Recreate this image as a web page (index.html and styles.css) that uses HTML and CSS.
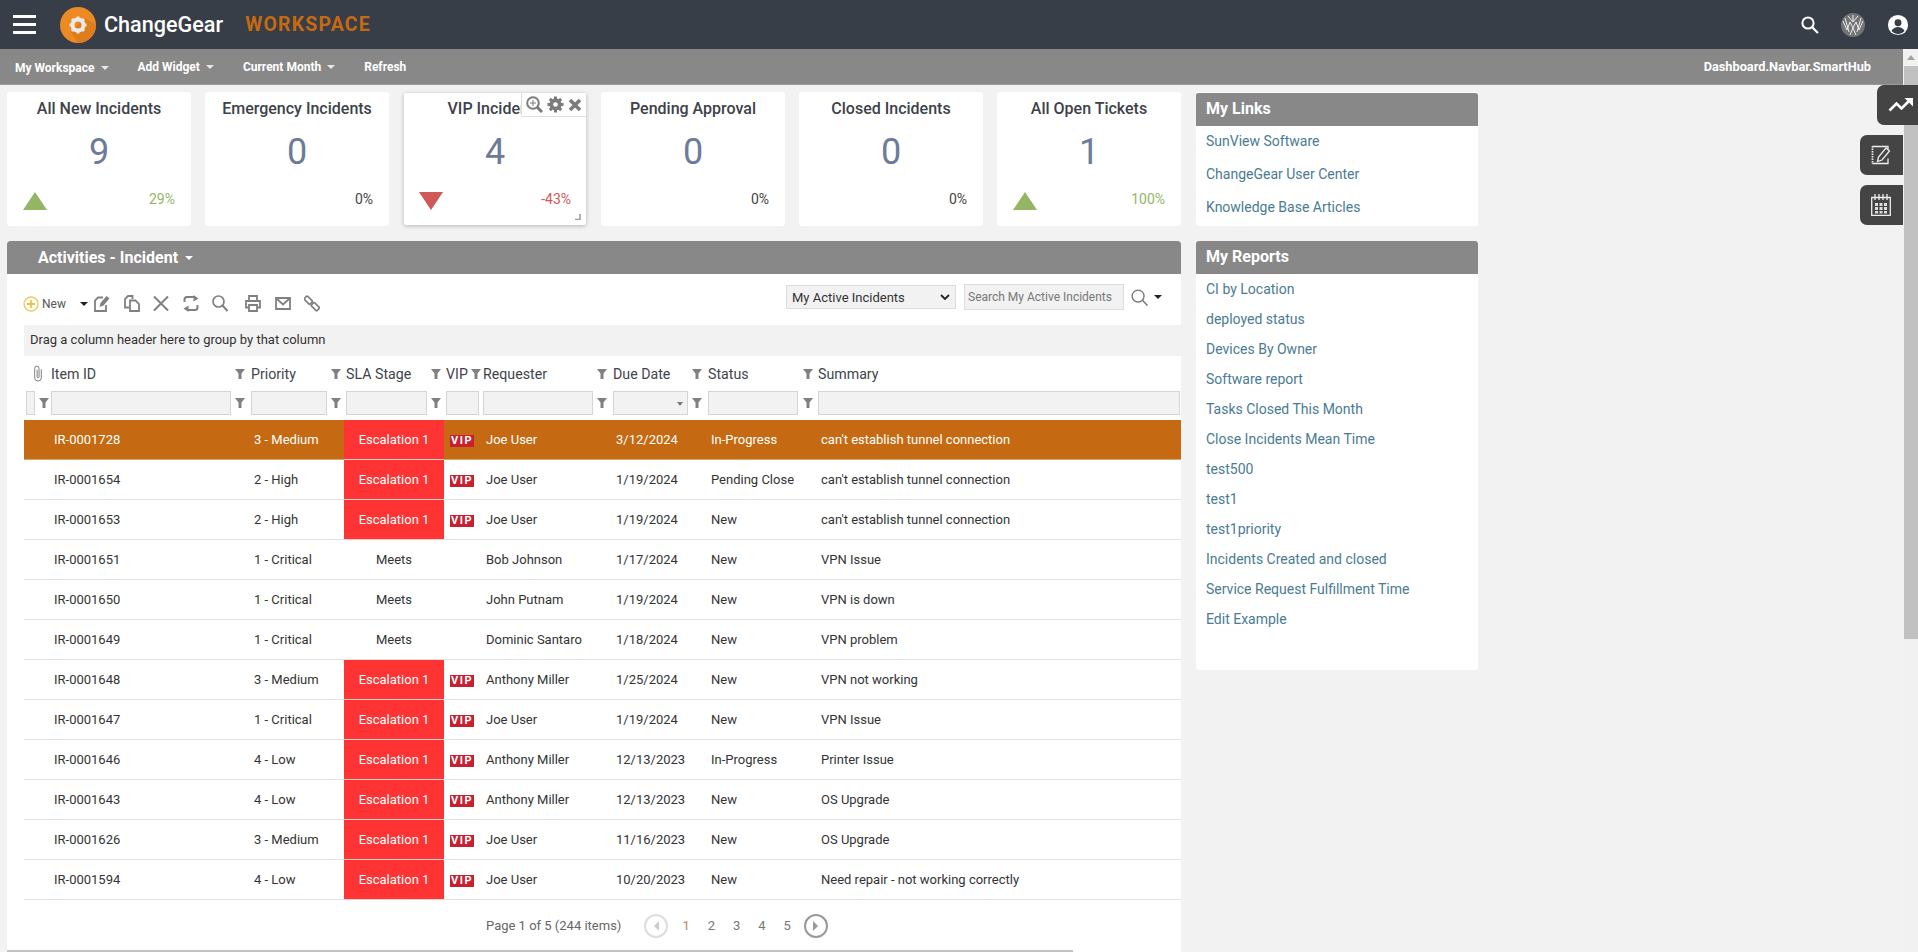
FILE: index.html
```html
<!DOCTYPE html>
<html lang="en">
<head>
<meta charset="utf-8">
<title>ChangeGear Workspace</title>
<link rel="stylesheet" href="styles.css">
</head>
<body>
<header class="topbar">
  <div class="burger"><i></i><i></i><i></i></div>
  <svg class="logo" viewBox="0 0 36 36"><circle cx="18" cy="18" r="18" fill="#ee8a23"/><path d="M18 36A18 18 0 0 0 36 18L25 11 11 25z" fill="#de7d1c"/><g fill="none" stroke="#eaeaea"><circle cx="18" cy="18" r="5.500" stroke-width="4"/><path d="M18 9.500v4M18 22.500v4M9.500 18h4M22.500 18h4M12 12l3 3M21 21l3 3M24 12l-3 3M15 21l-3 3" stroke-width="3"/></g></svg>
  <span class="brand">ChangeGear</span>
  <span class="product">WORKSPACE</span>
  <div class="top-icons">
    <svg class="ti-search" viewBox="0 0 20 20"><circle cx="8" cy="8" r="5.600" fill="none" stroke="#fff" stroke-width="2"/><path d="M12 12l6 6" stroke="#fff" stroke-width="2.200"/></svg>
    <svg class="ti-avatar" viewBox="0 0 24 24"><circle cx="12" cy="12" r="12" fill="#747474"/><path d="M2 8l4 9 3-8 3 6 3-6 3 8 4-9M4 5l4 14M20 5l-4 14M12 2v6M7 3l5 6 5-6M9 22l3-7 3 7" fill="none" stroke="#eee" stroke-width="1"/></svg>
    <svg class="ti-user" viewBox="0 0 24 24"><circle cx="12" cy="12" r="11" fill="#fff"/><circle cx="12" cy="9.500" r="3.800" fill="#373e47"/><path d="M4.800 18.600c1.600-3.200 4.300-4.400 7.200-4.400s5.600 1.200 7.200 4.400A10 10 0 0 1 12 22a10 10 0 0 1-7.200-3.400z" fill="#373e47"/></svg>
  </div>
</header>
<nav class="navbar">
  <a class="nav-item first">My Workspace<b class="caret"></b></a>
  <a class="nav-item">Add Widget<b class="caret"></b></a>
  <a class="nav-item">Current Month<b class="caret"></b></a>
  <a class="nav-item">Refresh</a>
  <span class="nav-right">Dashboard.Navbar.SmartHub</span>
</nav>
<main class="main">
  <div class="left">
    <section class="cards">
      <article class="card"><h3>All New Incidents</h3><div class="num">9</div><div class="foot"><svg class="tri" viewBox="0 0 24 18"><path d="M12 0l12 18H0z" fill="#93b665"/></svg><span class="pct up">29%</span></div></article>
      <article class="card"><h3>Emergency Incidents</h3><div class="num">0</div><div class="foot"><span class="pct">0%</span></div></article>
      <article class="card active"><h3>VIP Incidents</h3><div class="num">4</div><div class="foot"><svg class="tri" viewBox="0 0 24 18"><path d="M0 0h24L12 18z" fill="#cf5858"/></svg><span class="pct down">-43%</span></div>
        <div class="card-tools">
          <svg viewBox="0 0 17 17" width="17" height="17"><circle cx="7" cy="7" r="5.800" fill="none" stroke="#7b7b7b" stroke-width="2"/><path d="M11 11l5 5" stroke="#7b7b7b" stroke-width="3"/><path d="M7 4v6M4 7h6" stroke="#7b7b7b"/></svg>
          <svg viewBox="0 0 18 18" width="17" height="17"><g fill="none" stroke="#7b7b7b"><circle cx="9" cy="9" r="4.500" stroke-width="4"/><path d="M9 0.500v3M9 14.500v3M0.500 9h3M14.500 9h3M3 3l2 2M13 13l2 2M15 3l-2 2M5 13l-2 2" stroke-width="3.200"/></g></svg>
          <svg viewBox="0 0 14 14" width="14" height="14"><path d="M2 2l10 10M12 2L2 12" stroke="#7b7b7b" stroke-width="3.600"/></svg>
        </div>
        <svg class="resize" viewBox="0 0 6 6"><path d="M5 0v5.500H0" fill="none" stroke="#999" stroke-width="1.500"/></svg>
      </article>
      <article class="card"><h3>Pending Approval</h3><div class="num">0</div><div class="foot"><span class="pct">0%</span></div></article>
      <article class="card"><h3>Closed Incidents</h3><div class="num">0</div><div class="foot"><span class="pct">0%</span></div></article>
      <article class="card"><h3>All Open Tickets</h3><div class="num">1</div><div class="foot"><svg class="tri" viewBox="0 0 24 18"><path d="M12 0l12 18H0z" fill="#93b665"/></svg><span class="pct up">100%</span></div></article>
    </section>
    <section class="activities">
      <div class="panel-head act-head">Activities - Incident<b class="caret big"></b></div>
      <div class="toolbar">
        <svg class="plus" viewBox="0 0 16 16"><circle cx="8" cy="8" r="7" fill="none" stroke="#f0c95c" stroke-width="1.400"/><path d="M8 4v8M4 8h8" stroke="#f0c040" stroke-width="1.800"/></svg>
        <span class="new">New</span>
        <b class="mini-caret"></b>
        <svg class="tool t-edit" viewBox="0 0 16 17"><path d="M9 2.500H4L1 5.500V16h11V10" fill="none" stroke="#808080" stroke-width="1.800"/><path d="M5.500 12l1-4 6-7 3 2.500-6 7z" fill="#808080"/></svg>
        <svg class="tool t-copy" viewBox="0 0 16 17"><path d="M5 12.500H1V4l3-3h4.500v3" fill="none" stroke="#808080" stroke-width="1.800"/><path d="M6 5.500h5.500l3.500 3.500v7H6z" fill="none" stroke="#808080" stroke-width="1.800"/></svg>
        <svg class="tool t-x" viewBox="0 0 16 17"><path d="M1 1.500l14 14M15 1.500l-14 14" stroke="#808080" stroke-width="2"/></svg>
        <svg class="tool t-ref" viewBox="0 0 16 17"><path d="M1.500 7V4.500Q1.500 2 4 2h7M14.500 10v2.500q0 2.500-2.500 2.500H5" fill="none" stroke="#808080" stroke-width="2"/><path d="M10.500 0l5 3.500-5 3zM5.500 17l-5-3.500 5-3z" fill="#808080"/></svg>
        <svg class="tool t-find" viewBox="0 0 16 17"><circle cx="6.500" cy="6.500" r="5.500" fill="none" stroke="#808080" stroke-width="1.700"/><path d="M10.500 10.500l5 5.500" stroke="#808080" stroke-width="2"/></svg>
        <svg class="tool t-print" viewBox="0 0 16 17"><path d="M4 6V1h8v5M4 12.500H1V6h14v6.500h-3M4 10h8v6H4z" fill="none" stroke="#808080" stroke-width="1.800"/></svg>
        <svg class="tool t-mail" viewBox="0 0 16 17"><path d="M1 3h14v11H1z" fill="none" stroke="#808080" stroke-width="1.800"/><path d="M1 3l7 6.500L15 3" fill="none" stroke="#808080" stroke-width="1.800"/></svg>
        <svg class="tool t-link" viewBox="0 0 16 17"><rect x="0.500" y="3" width="8" height="4.500" rx="1" transform="rotate(45 4.500 5)" fill="none" stroke="#808080" stroke-width="1.700"/><rect x="7.500" y="9.500" width="8" height="4.500" rx="1" transform="rotate(45 11.500 11.500)" fill="none" stroke="#808080" stroke-width="1.700"/></svg>
        <div class="tool-right">
          <div class="select-box">My Active Incidents<svg class="chev" viewBox="0 0 10 6"><path d="M1 1l4 4 4-4" fill="none" stroke="#222" stroke-width="1.800"/></svg></div>
          <div class="search-box">Search My Active Incidents</div>
          <svg class="big-search" viewBox="0 0 18 18"><circle cx="7.500" cy="7.500" r="6.300" fill="none" stroke="#777" stroke-width="1.400"/><path d="M12 12l5.500 5.500" stroke="#777" stroke-width="1.600"/></svg>
          <b class="mini-caret"></b>
        </div>
      </div>
      <div class="group-panel">Drag a column header here to group by that column</div>
      <div class="row head">
        <div class="h-cell clip"><svg class="paper" viewBox="0 0 10 18"><path d="M8.500 4.500v9a3.500 3.500 0 0 1-7 0V3.500a2.300 2.300 0 0 1 4.600 0v9a1 1 0 0 1-2 0V5" fill="none" stroke="#777" stroke-width="1"/></svg></div>
        <div class="h-cell">Item ID<svg class="f" viewBox="0 0 10 10"><path d="M0 0h10L6.500 4.500V10h-3V4.500z"/></svg></div>
        <div class="h-cell">Priority<svg class="f" viewBox="0 0 10 10"><path d="M0 0h10L6.500 4.500V10h-3V4.500z"/></svg></div>
        <div class="h-cell">SLA Stage<svg class="f" viewBox="0 0 10 10"><path d="M0 0h10L6.500 4.500V10h-3V4.500z"/></svg></div>
        <div class="h-cell">VIP<svg class="f" viewBox="0 0 10 10"><path d="M0 0h10L6.500 4.500V10h-3V4.500z"/></svg></div>
        <div class="h-cell">Requester<svg class="f" viewBox="0 0 10 10"><path d="M0 0h10L6.500 4.500V10h-3V4.500z"/></svg></div>
        <div class="h-cell">Due Date<svg class="f" viewBox="0 0 10 10"><path d="M0 0h10L6.500 4.500V10h-3V4.500z"/></svg></div>
        <div class="h-cell">Status<svg class="f" viewBox="0 0 10 10"><path d="M0 0h10L6.500 4.500V10h-3V4.500z"/></svg></div>
        <div class="h-cell">Summary</div>
      </div>
      <div class="row filters">
        <div class="f-cell"><span class="inp"></span><svg class="f" viewBox="0 0 10 10"><path d="M0 0h10L6.500 4.500V10h-3V4.500z"/></svg></div>
        <div class="f-cell"><span class="inp"></span><svg class="f" viewBox="0 0 10 10"><path d="M0 0h10L6.500 4.500V10h-3V4.500z"/></svg></div>
        <div class="f-cell"><span class="inp"></span><svg class="f" viewBox="0 0 10 10"><path d="M0 0h10L6.500 4.500V10h-3V4.500z"/></svg></div>
        <div class="f-cell"><span class="inp"></span><svg class="f" viewBox="0 0 10 10"><path d="M0 0h10L6.500 4.500V10h-3V4.500z"/></svg></div>
        <div class="f-cell"><span class="inp"></span></div>
        <div class="f-cell"><span class="inp"></span><svg class="f" viewBox="0 0 10 10"><path d="M0 0h10L6.500 4.500V10h-3V4.500z"/></svg></div>
        <div class="f-cell"><span class="inp"><b class="dd"></b></span><svg class="f" viewBox="0 0 10 10"><path d="M0 0h10L6.500 4.500V10h-3V4.500z"/></svg></div>
        <div class="f-cell"><span class="inp"></span><svg class="f" viewBox="0 0 10 10"><path d="M0 0h10L6.500 4.500V10h-3V4.500z"/></svg></div>
        <div class="f-cell"><span class="inp"></span></div>
      </div>
      <div class="row data selected"><div></div><div>IR-0001728</div><div>3 - Medium</div><div class="esc">Escalation 1</div><div><span class="vip">VIP</span></div><div>Joe User</div><div>3/12/2024</div><div>In-Progress</div><div>can't establish tunnel connection</div></div>
      <div class="row data"><div></div><div>IR-0001654</div><div>2 - High</div><div class="esc">Escalation 1</div><div><span class="vip">VIP</span></div><div>Joe User</div><div>1/19/2024</div><div>Pending Close</div><div>can't establish tunnel connection</div></div>
      <div class="row data"><div></div><div>IR-0001653</div><div>2 - High</div><div class="esc">Escalation 1</div><div><span class="vip">VIP</span></div><div>Joe User</div><div>1/19/2024</div><div>New</div><div>can't establish tunnel connection</div></div>
      <div class="row data"><div></div><div>IR-0001651</div><div>1 - Critical</div><div class="meets">Meets</div><div></div><div>Bob Johnson</div><div>1/17/2024</div><div>New</div><div>VPN Issue</div></div>
      <div class="row data"><div></div><div>IR-0001650</div><div>1 - Critical</div><div class="meets">Meets</div><div></div><div>John Putnam</div><div>1/19/2024</div><div>New</div><div>VPN is down</div></div>
      <div class="row data"><div></div><div>IR-0001649</div><div>1 - Critical</div><div class="meets">Meets</div><div></div><div>Dominic Santaro</div><div>1/18/2024</div><div>New</div><div>VPN problem</div></div>
      <div class="row data"><div></div><div>IR-0001648</div><div>3 - Medium</div><div class="esc">Escalation 1</div><div><span class="vip">VIP</span></div><div>Anthony Miller</div><div>1/25/2024</div><div>New</div><div>VPN not working</div></div>
      <div class="row data"><div></div><div>IR-0001647</div><div>1 - Critical</div><div class="esc">Escalation 1</div><div><span class="vip">VIP</span></div><div>Joe User</div><div>1/19/2024</div><div>New</div><div>VPN Issue</div></div>
      <div class="row data"><div></div><div>IR-0001646</div><div>4 - Low</div><div class="esc">Escalation 1</div><div><span class="vip">VIP</span></div><div>Anthony Miller</div><div>12/13/2023</div><div>In-Progress</div><div>Printer Issue</div></div>
      <div class="row data"><div></div><div>IR-0001643</div><div>4 - Low</div><div class="esc">Escalation 1</div><div><span class="vip">VIP</span></div><div>Anthony Miller</div><div>12/13/2023</div><div>New</div><div>OS Upgrade</div></div>
      <div class="row data"><div></div><div>IR-0001626</div><div>3 - Medium</div><div class="esc">Escalation 1</div><div><span class="vip">VIP</span></div><div>Joe User</div><div>11/16/2023</div><div>New</div><div>OS Upgrade</div></div>
      <div class="row data"><div></div><div>IR-0001594</div><div>4 - Low</div><div class="esc">Escalation 1</div><div><span class="vip">VIP</span></div><div>Joe User</div><div>10/20/2023</div><div>New</div><div>Need repair - not working correctly</div></div>
      <div class="pager">
        <span class="summary">Page 1 of 5 (244 items)</span>
        <span class="pg-btn off"><b class="arr-l"></b></span>
        <span class="pg cur">1</span><span class="pg">2</span><span class="pg">3</span><span class="pg">4</span><span class="pg">5</span>
        <span class="pg-btn next"><b class="arr-r"></b></span>
      </div>
      <div class="hscroll"></div>
    </section>
  </div>
  <aside class="right">
    <section class="panel links">
      <div class="panel-head side-head">My Links</div>
      <ul class="list-links"><li>SunView Software</li><li>ChangeGear User Center</li><li>Knowledge Base Articles</li></ul>
    </section>
    <section class="panel reports">
      <div class="panel-head side-head">My Reports</div>
      <ul class="list-reports"><li>CI by Location</li><li>deployed status</li><li>Devices By Owner</li><li>Software report</li><li>Tasks Closed This Month</li><li>Close Incidents Mean Time</li><li>test500</li><li>test1</li><li>test1priority</li><li>Incidents Created and closed</li><li>Service Request Fulfillment Time</li><li>Edit Example</li></ul>
    </section>
  </aside>
</main>
<div class="vscroll"><b class="up-arrow"></b><div class="thumb"></div></div>
<div class="side-tab tab-trend"><svg viewBox="0 0 25 14" width="25" height="14"><path d="M1.500 12.500l7-7 5 5 8-8" fill="none" stroke="#fff" stroke-width="2.600"/><path d="M16.500 0H25v8.500z" fill="#fff"/></svg></div>
<div class="side-tab tab-note"><svg viewBox="0 0 20 20" width="20" height="20"><path d="M1.500 1v18" fill="none" stroke="#eee" stroke-dasharray="1.500 1" stroke-width="1.800"/><path d="M1.500 1.500h15.500v3M1.500 18.500h15.500v-5" fill="none" stroke="#eee" stroke-width="1.300"/><path d="M6.500 16.500l1-4.500 7.500-9 3.500 3-7.500 9z" fill="none" stroke="#eee" stroke-width="1.300"/></svg></div>
<div class="side-tab tab-cal"><svg viewBox="0 0 20 22" width="20" height="22"><path d="M0.700 3.500h18.600v18H0.700z" fill="none" stroke="#eee" stroke-width="1.300"/><path d="M4 0v6M8 0v6M12 0v6M16 0v6" stroke="#eee" stroke-width="1.300"/><path d="M4 9h3v3H4zM8.500 9h3v3h-3zM13 9h3v3h-3zM4 13h3v3H4zM8.500 13h3v3h-3zM13 13h3v3h-3zM4 17h3v2.500H4zM8.500 17h3v2.500h-3zM13 17h3v2.500h-3z" fill="#ddd"/></svg></div>
</body>
</html>
```

FILE: styles.css
```css
* { box-sizing: border-box; }
html, body { margin: 0; height: 100%; overflow: hidden; }
body { background: #f2f2f2; font-family: Roboto, "Liberation Sans", sans-serif; font-size: 13px; color: #333; width: 1918px; height: 952px; position: relative; }

.topbar { height: 49px; background: #373e47; display: flex; align-items: center; color: #fff; }
.burger { width: 23px; margin-left: 13px; margin-right: 1px; display: flex; flex-direction: column; gap: 5px; }
.burger i { display: block; height: 3px; background: #fff; }
.logo { width: 36px; height: 36px; margin-left: 23px; }
.brand { font-size: 21.600px; font-weight: 500; margin-left: 8px; }
.product { font-size: 19.500px; font-weight: 700; color: #c56a12; letter-spacing: 1.200px; margin-left: 22px; }
.top-icons { margin-left: auto; display: flex; align-items: center; }
.ti-search { width: 20px; height: 20px; margin-right: 21px; }
.ti-avatar { width: 24px; height: 24px; margin-right: 22px; }
.ti-user { width: 22px; height: 22px; margin-right: 9px; }

.navbar { height: 36px; width: 1904px; background: #888; color: #fff; display: flex; align-items: center; font-weight: 700; font-size: 12px; padding-left: 15px; border-bottom: 1px solid #999; }
.nav-item { margin-right: 29px; display: flex; align-items: center; }
.nav-item.first { padding-top: 2px; }
.caret { display: inline-block; border: 4px solid transparent; border-top-color: #e8e8e8; border-bottom: 0; margin-left: 6px; }
.caret.big { margin-left: 7px; border-top-color: #fff; }
.nav-right { margin-left: auto; margin-right: 33px; font-size: 12.750px; }

.main { display: flex; gap: 14px; padding: 7px 0 0 7px; align-items: flex-start; }
.left { width: 1174px; }
.cards { display: flex; gap: 14px; }
.card { width: 184px; height: 134px; background: #fff; border-radius: 3px; position: relative; text-align: center; overflow: hidden; flex: none; }
.card h3 { margin: 7px 0 0; font-size: 16px; font-weight: 500; color: #3d4249; line-height: 19px; }
.num { font-size: 36px; font-weight: 400; color: #6c7b9b; line-height: 45px; margin-top: 12px; }
.foot { position: absolute; left: 16px; right: 16px; bottom: 15px; display: flex; align-items: flex-end; justify-content: flex-end; height: 20px; }
.tri { width: 24px; height: 18px; position: absolute; left: 0; bottom: 1px; }
.pct { font-size: 14px; color: #444; line-height: 16px; margin-bottom: 4px; }
.pct.up { color: #93b665; }
.pct.down { color: #cf5858; }
.card.active { box-shadow: 0 1px 4px rgba(0,0,0,.25); width: 182px; margin: 1px; height: 132px; border-radius: 2px; overflow: visible; }
.card.active h3 { margin-top: 6px; }
.card.active .foot { left: 15px; right: 15px; bottom: 14px; }
.card-tools { position: absolute; right: 0; top: 0; height: 24px; width: 65px; background: #fff; border: 1px solid #ddd; border-top: 0; border-right: 0; border-bottom-left-radius: 2px; display: flex; align-items: center; gap: 4px; padding-left: 4px; }
.resize { position: absolute; right: 5px; bottom: 5px; width: 6px; height: 6px; }

.activities { margin-top: 15px; background: #fff; height: 711px; border-radius: 3px 3px 0 0; overflow: hidden; position: relative; }
.panel-head { background: #888; color: #fff; font-weight: 700; height: 33px; display: flex; align-items: center; border-radius: 3px 3px 0 0; font-size: 16px; }
.act-head { padding-left: 31px; }
.toolbar { height: 51px; display: flex; align-items: center; padding: 8px 0 0 16px; position: relative; }
.plus { width: 16px; height: 16px; flex: none; }
.new { font-size: 12px; color: #555; margin-left: 3px; }
.mini-caret { border: 4px solid transparent; border-top: 4px solid #222; border-bottom: 0; display: inline-block; }
.toolbar > .mini-caret { margin-left: 14px; }
.tool { width: 16px; height: 17px; flex: none; }
.t-edit { margin-left: 6px; }
.t-copy { margin-left: 14px; }
.t-x { margin-left: 13px; }
.t-ref { margin-left: 14px; }
.t-find { margin-left: 13px; }
.t-print { margin-left: 17px; }
.t-mail { margin-left: 14px; }
.t-link { margin-left: 13px; }
.tool-right { position: absolute; right: 0; top: 10px; display: flex; align-items: center; }
.select-box { width: 170px; height: 24px; background: #f2f2f2; border: 1px solid #ddd; display: flex; align-items: center; justify-content: space-between; padding: 0 5px; font-size: 13px; color: #333; }
.chev { width: 10px; height: 6px; }
.search-box { width: 160px; height: 26px; margin-left: 8px; background: #f2f2f2; border: 1px solid #ddd; font-size: 12px; color: #777; display: flex; align-items: center; padding-left: 3px; }
.big-search { width: 17px; height: 17px; margin-left: 7px; }
.tool-right .mini-caret { margin: 0 19px 0 6px; }
.group-panel { margin-left: 17px; height: 31px; background: #f2f2f2; display: flex; align-items: center; padding: 0 0 2px 6px; font-size: 13px; color: #333; }

.row { display: grid; grid-template-columns: 24px 200px 96px 100px 37px 129px 95px 111px 364px; margin-left: 17px; }
.head { height: 35px; }
.h-cell { position: relative; display: flex; align-items: center; padding-left: 3px; font-size: 14.200px; font-weight: 400; color: #3f444b; white-space: nowrap; }
.h-cell:nth-child(4), .h-cell:nth-child(5), .h-cell:nth-child(6), .h-cell:nth-child(9) { padding-left: 2px; }
.h-cell .f, .f-cell .f { width: 10px; height: 10px; fill: #808080; position: absolute; right: 3px; top: 50%; margin-top: -5px; }
.h-cell:nth-child(5) .f { right: 0; }
.h-cell.clip { padding-left: 9px; }
.paper { width: 10px; height: 17px; }
.filters { height: 29px; }
.f-cell { position: relative; }
.inp { display: block; height: 24px; background: #f2f2f2; border: 1px solid #d5d5d5; margin: 0 17px 0 3px; position: relative; }
.f-cell:first-child .inp { margin: 0 13px 0 2px; }
.f-cell:first-child .f { right: -1px; }
.f-cell:nth-child(4) .inp, .f-cell:nth-child(6) .inp { margin-left: 2px; }
.f-cell:nth-child(5) .inp { margin: 0 2px 0 2px; }
.f-cell:nth-child(8) .inp { margin-right: 18px; }
.f-cell:last-child .inp { margin: 0 0 0 2px; }
.f-cell .f { top: 12px; }
.dd { position: absolute; right: 4px; top: 10px; border: 3px solid transparent; border-top: 4px solid #777; border-bottom: 0; }

.data { height: 40px; border-bottom: 1px solid #e3e3e3; align-items: stretch; font-size: 13px; color: #333; }
.data > div { display: flex; align-items: center; padding-left: 6px; white-space: nowrap; }
.data > div:nth-child(6), .data > div:nth-child(9) { padding-left: 5px; }
.selected { background: #c56a12; color: #fff; border-bottom-color: #d9a36d; }
.data > .esc { background: #fe3333; color: #fff; justify-content: center; padding: 0; margin-bottom: -1px; border-bottom: 1px solid #f6d0d0; }
.data > .meets { justify-content: center; padding: 0; }
.vip { display: inline-block; background: #c8202f; color: #fff; font-size: 11px; font-weight: 700; letter-spacing: 1.500px; width: 24px; height: 12px; line-height: 12px; text-align: center; margin-top: 2px; }

.pager { height: 51px; display: flex; align-items: center; padding-left: 479px; color: #666; font-size: 13px; }
.summary { margin-right: 23px; }
.pg { width: 25.300px; text-align: center; color: #777; }
.pg.cur { color: #b8864f; }
.pg-btn { width: 24px; height: 24px; border-radius: 50%; border: 2px solid #999; display: flex; align-items: center; justify-content: center; }
.pg-btn.off { border-color: #ddd; margin-right: 5px; }
.pg-btn.next { margin-left: 4px; }
.arr-l { border: 5px solid transparent; border-right: 5px solid #ccc; border-left: 0; }
.arr-r { border: 5px solid transparent; border-left: 5px solid #999; border-right: 0; }
.hscroll { position: absolute; left: 0; bottom: 0; width: 1066px; height: 2px; background: #c1c1c1; }

.right { width: 282px; margin-left: 1px; display: flex; flex-direction: column; gap: 15px; }
.panel { background: #fff; border-radius: 3px; }
.side-head { padding: 0 0 2px 10px; }
.links { height: 134px; }
.links .side-head { height: 34px; border-top: 1px solid #fff; }
.reports { height: 429px; }
ul { list-style: none; margin: 0; padding: 0 0 0 10px; font-size: 14px; color: #4a7b92; }
.list-links { margin-top: -2px; }
.list-links li { height: 33px; display: flex; align-items: center; }
.list-reports li { height: 30px; display: flex; align-items: center; }

.side-tab { position: absolute; background: #444; display: flex; align-items: center; justify-content: center; border-radius: 7px 0 0 7px; }
.tab-trend { left: 1877px; top: 85px; width: 41px; height: 40px; padding-left: 5px; }
.tab-note { left: 1860px; top: 135px; width: 43px; height: 40px; padding-right: 2px; }
.tab-cal { left: 1860px; top: 185px; width: 43px; height: 40px; padding-right: 2px; }
.vscroll { position: absolute; right: 0; top: 49px; width: 15px; height: 903px; background: #f1f1f1; }
.up-arrow { position: absolute; left: 4px; top: 6px; border: 4px solid transparent; border-bottom: 5px solid #a3a3a3; border-top: 0; }
.thumb { position: absolute; left: 1px; right: 0; top: 17px; height: 573px; background: #c1c1c1; }
```
